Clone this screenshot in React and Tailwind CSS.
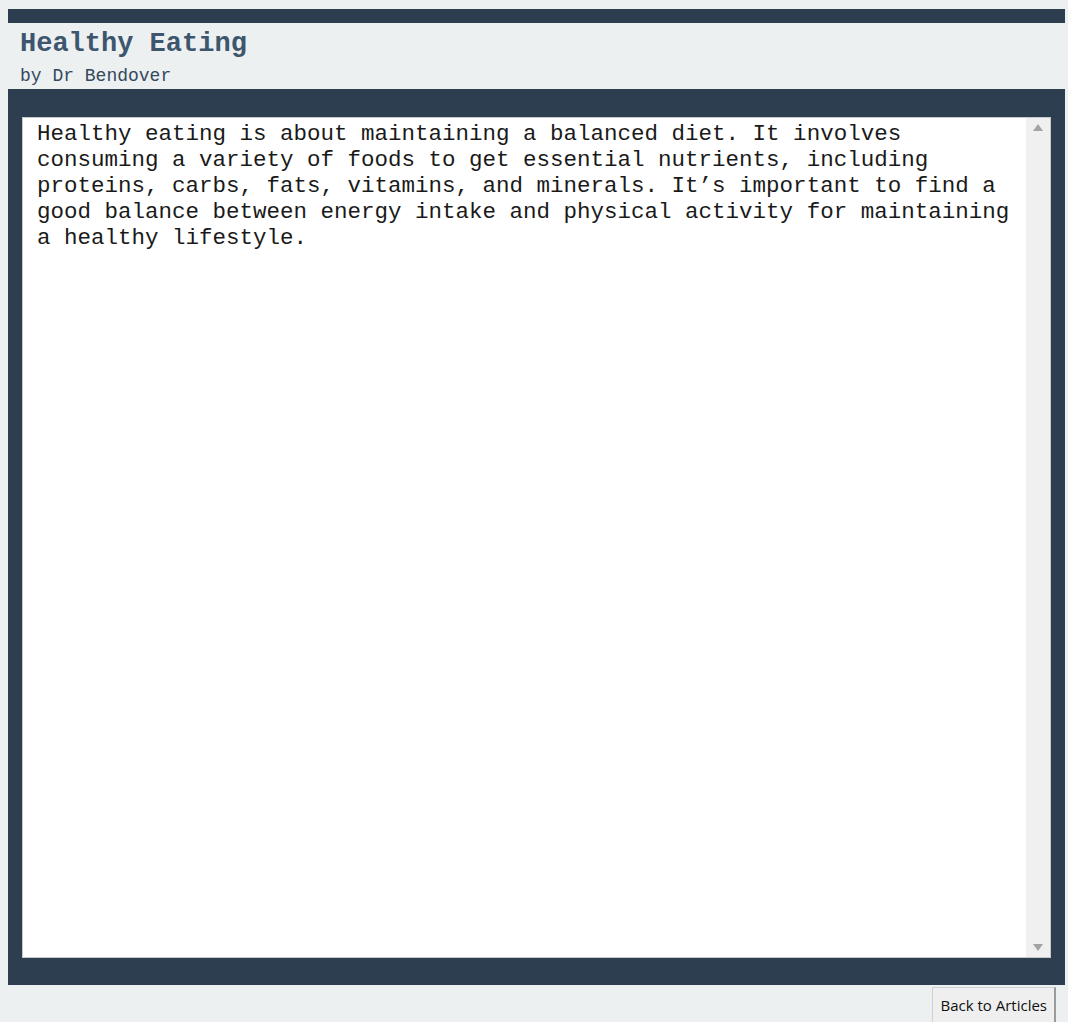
import React from 'react';

const mono = "font-['Liberation_Mono','DejaVu_Sans_Mono',monospace]";

function Scrollbar() {
  return (
    <div className="w-[24px] shrink-0 bg-[#f0f0f0] flex flex-col justify-between items-center py-[6px]">
      <svg width="10" height="7" viewBox="0 0 10 7">
        <path d="M5 0 L10 7 L0 7 Z" fill="#a3a3a3" />
      </svg>
      <svg width="10" height="7" viewBox="0 0 10 7">
        <path d="M0 0 L10 0 L5 7 Z" fill="#a3a3a3" />
      </svg>
    </div>
  );
}

export default function App() {
  return (
    <div className="min-h-screen bg-[#ecf0f1] pl-2 pr-[3px] pt-[9px]">
      <div className="h-[14px] bg-[#2c3e50]" />

      <header className="pl-[12px] pt-[4px]">
        <h1 className={`${mono} text-[27px] leading-[34px] font-bold text-[#3d566e]`}>
          Healthy Eating
        </h1>
        <p className={`${mono} mt-[2px] text-[18px] leading-[26px] text-[#34495e]`}>by Dr Bendover</p>
      </header>

      <div className="bg-[#2c3e50] pt-[28px] pb-[27px] px-[14px]">
        <div className="h-[841px] flex bg-white border border-[#c8c8c8]">
          <div className={`flex-1 pl-[14px] pr-[10px] pt-[3px] ${mono} text-[22.5px] leading-[26px] text-[#1a1a1a]`}>
            Healthy eating is about maintaining a balanced diet. It involves consuming a variety of foods to get essential nutrients, including proteins, carbs, fats, vitamins, and minerals. It’s important to find a good balance between energy intake and physical activity for maintaining a healthy lifestyle.
          </div>
          <Scrollbar />
        </div>
      </div>

      <div className="flex justify-end pr-[9px] pt-[2px]">
        <button
          type="button"
          className="h-[36px] px-[7px] bg-[#efefef] border border-[#d0d0d0] border-r-[#9a9a9a] border-r-2 font-['Open_Sans','Noto_Sans',sans-serif] text-[15px] text-[#111]"
        >
          Back to Articles
        </button>
      </div>
    </div>
  );
}
